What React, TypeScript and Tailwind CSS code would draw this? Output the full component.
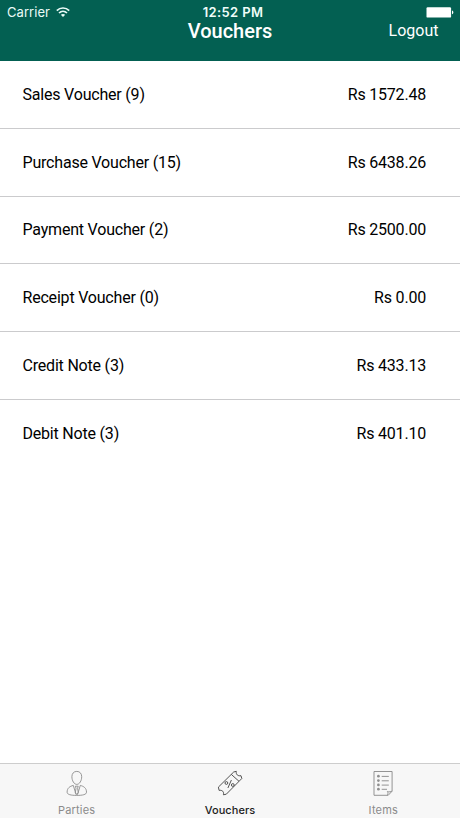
type Voucher = { name: string; amount: string };

const vouchers: Voucher[] = [
  { name: 'Sales Voucher (9)', amount: 'Rs 1572.48' },
  { name: 'Purchase Voucher (15)', amount: 'Rs 6438.26' },
  { name: 'Payment Voucher (2)', amount: 'Rs 2500.00' },
  { name: 'Receipt Voucher (0)', amount: 'Rs 0.00' },
  { name: 'Credit Note (3)', amount: 'Rs 433.13' },
  { name: 'Debit Note (3)', amount: 'Rs 401.10' },
];

function WifiIcon() {
  return (
    <svg width="14" height="10" viewBox="0 0 14 10" fill="none" stroke="#e9fbf7" strokeWidth="1.7">
      <path d="M0.8 3.6C4.3 0.1 9.7 0.1 13.2 3.6" />
      <path d="M3 6C5.3 3.8 8.7 3.8 11 6" />
      <path d="M7 10L4.8 7.8C6.1 6.7 7.9 6.7 9.2 7.8Z" fill="#e9fbf7" stroke="none" />
    </svg>
  );
}

function BatteryIcon() {
  return (
    <svg width="28" height="11" viewBox="0 0 28 11" fill="#fff">
      <rect x="0.5" y="0.2" width="24.6" height="10.4" rx="1.2" />
      <path d="M26 3.6C27.8 4 27.8 7 26 7.3Z" />
    </svg>
  );
}

function PartiesIcon() {
  return (
    <svg width="28" height="28" viewBox="0 0 28 28" fill="none" stroke="#8c8c8c" strokeWidth="0.9" strokeLinejoin="round">
      <path d="M13.8 2.4C10.6 2.4 8.9 4.7 8.9 7.7C8.9 11.7 11.1 15.4 13.8 15.4S18.7 11.7 18.7 7.7C18.7 4.7 17 2.4 13.8 2.4Z" />
      <path d="M10.3 16.4C6.8 17.3 4.1 19.1 4.1 23.2C4.1 25.6 8 26.4 13.8 26.4S23.5 25.6 23.5 23.2C23.5 19.1 20.8 17.3 17.3 16.4" />
      <path d="M10.3 16.4L13.1 25.6M17.3 16.4L14.5 25.6" />
      <path d="M12.4 17.2H15.2L14.6 19.3L15.3 23.6L13.8 25.6L12.3 23.6L13 19.3Z" />
    </svg>
  );
}

function VouchersIcon() {
  return (
    <svg width="28" height="28" viewBox="0 0 28 28" fill="none" stroke="#4b4b4b" strokeWidth="0.95" strokeLinejoin="round">
      <path d="M2.4 18.1L17.7 3L20.3 2.3C19.8 5.5 21.8 7.3 25 6.7L25.8 9.5L10.3 25.2L7.4 25.8C8.2 22.8 6.3 20.8 3.1 21.4Z" />
      <path d="M15.3 5.4L23 12.3" />
      <path d="M15.4 11L11.9 19" />
      <circle cx="10.4" cy="14" r="1.4" />
      <circle cx="16.8" cy="16" r="1.4" />
    </svg>
  );
}

function ItemsIcon() {
  return (
    <svg width="28" height="28" viewBox="0 0 28 28" fill="none" stroke="#8e8e8e" strokeWidth="0.95" strokeLinejoin="round">
      <path d="M5 2.5H23.1V22.2L19.2 26.3H5Z" />
      <path d="M18.2 26.2C19.3 24.9 19.1 23.6 18.4 22.5C20.1 23.1 21.9 22.9 23.1 22" />
      <path d="M12.7 7.4H19.8M12.7 11.8H19.8M12.7 16.1H19.8M12.7 20.3H18" />
      <g fill="#8e8e8e" stroke="none">
        <circle cx="9.4" cy="7.2" r="1.35" />
        <circle cx="9.4" cy="11.6" r="1.35" />
        <circle cx="9.4" cy="15.9" r="1.35" />
        <circle cx="9.4" cy="20.2" r="1.35" />
      </g>
    </svg>
  );
}

const tabs = [
  { label: 'Parties', Icon: PartiesIcon, active: false },
  { label: 'Vouchers', Icon: VouchersIcon, active: true },
  { label: 'Items', Icon: ItemsIcon, active: false },
];

export default function App() {
  return (
    <div className="flex h-[818px] w-[460px] flex-col overflow-hidden bg-white font-['Roboto',sans-serif] text-black">
      <header className="h-[61.2px] shrink-0 bg-[#036052] text-white">
        <div className="grid h-[20px] grid-cols-3 items-start pt-[4px] font-['Inter',sans-serif] text-[13px] leading-[16px]">
          <div className="flex items-center gap-[6px] pl-[7px] text-[#e9fbf7]">
            <span className="tracking-[0.05px]">Carrier</span>
            <WifiIcon />
          </div>
          <div className="pl-[6px] text-center font-semibold tracking-[0.35px] text-[#effdf9]">12:52 PM</div>
          <div className="flex h-[16px] items-center justify-end pr-[6px]">
            <BatteryIcon />
          </div>
        </div>
        <div className="grid h-[22px] grid-cols-3 items-center">
          <span />
          <h1 className="text-center text-[20px] leading-[22px] font-medium">Vouchers</h1>
          <button className="pr-[21.5px] text-right text-[16px] leading-[22px]">Logout</button>
        </div>
      </header>

      <main className="flex-1">
        {vouchers.map((v, i) => (
          <div
            key={v.name}
            className={`flex h-[67.7px] items-center justify-between pt-[1px] pr-[34px] pl-[22.5px] text-[16px] leading-[20px] tracking-[-0.2px] ${
              i < vouchers.length - 1 ? 'border-b border-[#cbcbcd]' : ''
            }`}
          >
            <span>{v.name}</span>
            <span>{v.amount}</span>
          </div>
        ))}
      </main>

      <nav className="grid h-[55px] shrink-0 grid-cols-3 border-t border-[#cdcdcd] bg-[#f7f7f7]">
        {tabs.map(({ label, Icon, active }) => (
          <div key={label} className="flex flex-col items-center pt-[5px]">
            <Icon />
            <span
              className={`mt-[6px] font-['Inter',sans-serif] text-[11px] leading-[14px] ${
                active ? 'font-medium tracking-[0.05px] text-[#1c1c1c]' : 'tracking-[0.2px] text-[#8b8b8b]'
              }`}
            >
              {label}
            </span>
          </div>
        ))}
      </nav>
    </div>
  );
}
